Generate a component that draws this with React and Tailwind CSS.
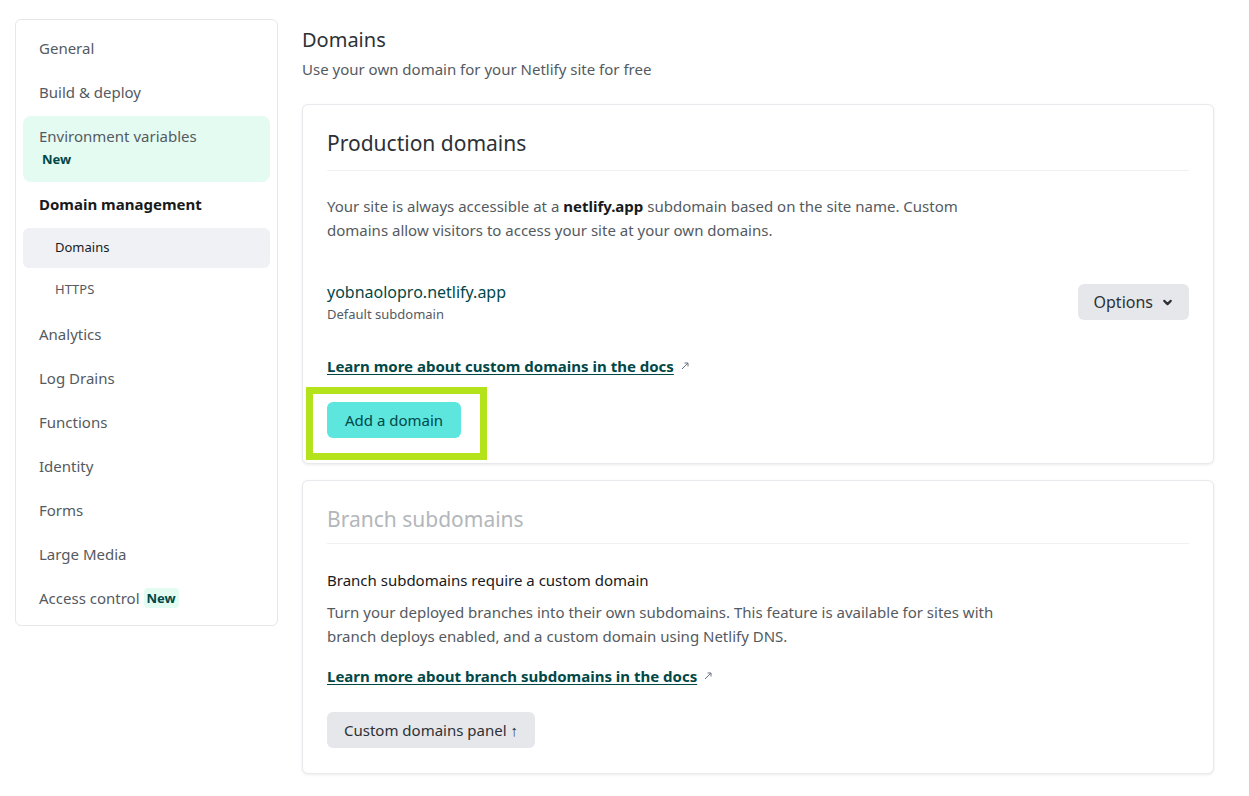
import { ChevronDown } from "lucide-react";

const navItems = [
    { label: "General" },
    { label: "Build & deploy" },
    { label: "Environment variables", badgeBelow: true, active: true },
    { label: "Domain management", bold: true },
    { label: "Domains", sub: true, selected: true },
    { label: "HTTPS", sub: true },
    { label: "Analytics" },
    { label: "Log Drains" },
    { label: "Functions" },
    { label: "Identity" },
    { label: "Forms" },
    { label: "Large Media" },
    { label: "Access control", badgeInline: true },
];

function Sidebar() {
    return (
        <nav className="w-[263px] shrink-0 rounded-md border border-[#e5e7eb] bg-white px-[7px] pt-[6px] pb-[5px] self-start">
            <ul className="flex flex-col">
                {navItems.map((item) => {
                    if (item.badgeBelow) {
                        return (
                            <li key={item.label} className="mt-[2px] rounded-lg bg-[#e4fbf2] px-4 pt-[9px] pb-[11px]">
                                <p className="text-[15px] leading-[22px] text-[#545a61]">{item.label}</p>
                                <p className="pl-[3px] text-[13px] leading-[24px] font-bold text-[#014847]">New</p>
                            </li>
                        );
                    }
                    if (item.sub) {
                        return (
                            <li
                                key={item.label}
                                className={`rounded-md pl-8 flex items-center text-[13px] ${
                                    item.selected ? "mt-[2px] h-10 bg-[#eff1f4] text-[#181a1c]" : "h-11 text-[#545a61]"
                                }`}
                            >
                                {item.label}
                            </li>
                        );
                    }
                    return (
                        <li key={item.label} className="h-11 px-4 flex items-center gap-1">
                            <span className={`text-[15px] ${item.bold ? "font-bold text-[#181a1c]" : "text-[#545a61]"}`}>{item.label}</span>
                            {item.badgeInline && (
                                <span className="rounded bg-[#e4fbf2] px-[3px] text-[13px] leading-[20px] font-bold text-[#014847]">New</span>
                            )}
                        </li>
                    );
                })}
            </ul>
        </nav>
    );
}

function ExternalArrow() {
    return (
        <svg width="10" height="10" viewBox="0 0 10 10" className="ml-[6px] inline-block text-[#6b7280]" fill="none" stroke="currentColor" strokeWidth="1">
            <path d="M2 8 L8 2 M4.5 2 H8 V5.5" />
        </svg>
    );
}

function Card({ title, muted, children }) {
    return (
        <section className="rounded-md border border-[#e7e9ec] bg-white px-6 pb-[25px] shadow-[0_1px_3px_rgba(0,0,0,0.08)]">
            <h2
                className={`pt-[24px] text-[21px] leading-7 border-b border-[#f0f1f3] ${
                    muted ? "pb-[10px] text-[#b3b7bb]" : "pb-[13px] text-[#2d3136]"
                }`}
            >
                {title}
            </h2>
            {children}
        </section>
    );
}

export default function App() {
    return (
        <div className="min-h-[796px] bg-white font-['Noto_Sans','Open_Sans',sans-serif] flex gap-6 pl-[15px] pr-[35px] pt-[19px] pb-6">
            <Sidebar />
            <main className="flex-1 flex flex-col">
                <h1 className="text-[20px] leading-7 text-[#2d3136] mt-[7px]">Domains</h1>
                <p className="text-[15px] leading-6 text-[#545a61] mt-[3px]">Use your own domain for your Netlify site for free</p>

                <div className="mt-[23px] flex flex-col gap-4">
                    <Card title="Production domains">
                        <p className="mt-[23px] max-w-[680px] text-[15px] leading-6 text-[#545a61]">
                            Your site is always accessible at a <strong className="font-bold text-[#181a1c]">netlify.app</strong> subdomain based on the site name. Custom domains allow visitors to access your site at your own domains.
                        </p>
                        <div className="mt-[38px] flex items-center justify-between">
                            <div>
                                <p className="text-[16px] leading-6 text-[#014847]">yobnaolopro.netlify.app</p>
                                <p className="text-[13px] leading-5 text-[#545a61]">Default subdomain</p>
                            </div>
                            <button className="h-9 rounded-md bg-[#e5e7ea] pl-4 pr-[15px] flex items-center gap-2 text-[16px] text-[#2d3136]">
                                Options
                                <ChevronDown size={13} strokeWidth={4} />
                            </button>
                        </div>
                        <div className="mt-[30px] flex items-center">
                            <a href="#" className="text-[15px] leading-6 font-bold text-[#014847] underline underline-offset-2">
                                Learn more about custom domains in the docs
                            </a>
                            <ExternalArrow />
                        </div>
                        <div className="relative mt-[24px] w-fit">
                            <button className="h-9 rounded-md bg-[#5ce6de] px-[18px] text-[15px] text-[#014847]">Add a domain</button>
                            <div className="absolute -left-[21px] -top-[15px] w-[181px] h-[73px] border-[7px] border-[#b4e31c] pointer-events-none"></div>
                        </div>
                    </Card>

                    <Card title="Branch subdomains" muted>
                        <h3 className="mt-[24px] text-[15px] leading-6 text-[#181a1c]">Branch subdomains require a custom domain</h3>
                        <p className="mt-[8px] max-w-[680px] text-[15px] leading-6 text-[#545a61]">
                            Turn your deployed branches into their own subdomains. This feature is available for sites with branch deploys enabled, and a custom domain using Netlify DNS.
                        </p>
                        <div className="mt-[16px] flex items-center">
                            <a href="#" className="text-[15px] leading-6 font-bold text-[#014847] underline underline-offset-2">
                                Learn more about branch subdomains in the docs
                            </a>
                            <ExternalArrow />
                        </div>
                        <button className="mt-[24px] h-9 rounded-md bg-[#e5e7ea] px-[17px] text-[15px] text-[#2d3136]">Custom domains panel ↑</button>
                    </Card>
                </div>
            </main>
        </div>
    );
}
